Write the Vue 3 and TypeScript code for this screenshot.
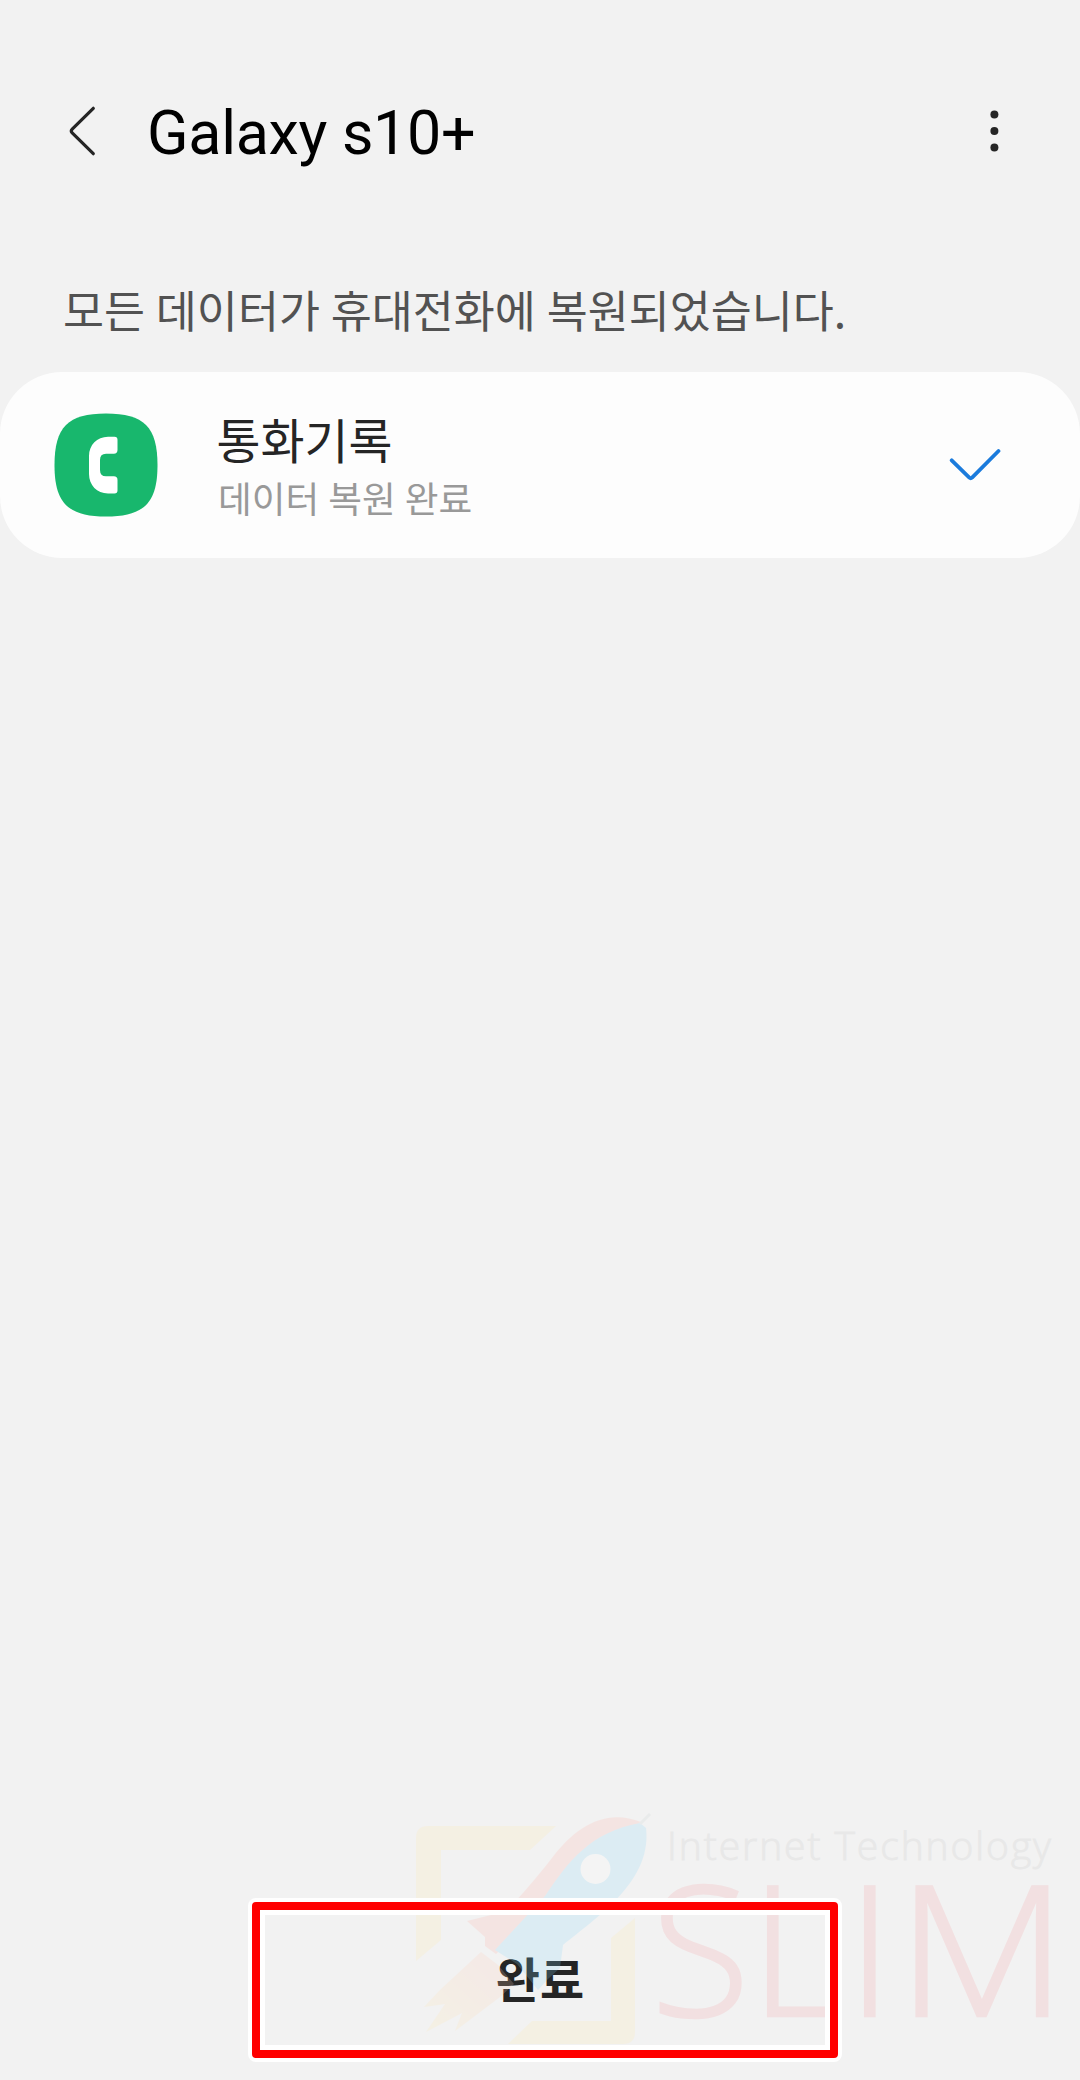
<script setup lang="ts">
interface BackupItem {
  name: string
  status: string
}

const deviceName = 'Galaxy s10+'
const message = '모든 데이터가 휴대전화에 복원되었습니다.'
const items: BackupItem[] = [{ name: '통화기록', status: '데이터 복원 완료' }]
</script>

<template>
  <main class="screen">
    <header class="bar">
      <svg class="back" viewBox="0 0 32 56" width="32" height="56" aria-hidden="true">
        <path d="M27.3 5.3 6.200 26.200Q4.400 28 6.200 29.900L27.300 50.700" />
      </svg>
      <h1 class="title">{{ deviceName }}</h1>
      <svg class="more" viewBox="0 0 12 44" width="12" height="44" aria-hidden="true">
        <circle cx="6.400" cy="5.500" r="4" />
        <circle cx="6.400" cy="22" r="4" />
        <circle cx="6.400" cy="38.500" r="4" />
      </svg>
    </header>

    <p class="message">{{ message }}</p>

    <ul class="card">
      <li v-for="item in items" :key="item.name" class="row">
        <svg class="app-icon" viewBox="0 0 104 104" width="104" height="104" aria-hidden="true">
          <path class="tile" d="M52 .5C90 .5 103.500 14 103.500 52S90 103.500 52 103.500.500 90 .500 52 14 .500 52 .500Z" />
          <path class="handset" d="M60.500 23.700H54C43 23.700 35 32 35 43V61C35 72 43 80.500 54 80.500H60.500Q63.500 80.500 63.500 77.500V67Q63.500 63.300 59.800 63.300H52Q46 63.300 46 57V47Q46 40.700 52 40.700H59.800Q63.500 40.700 63.500 37V26.700Q63.500 23.700 60.500 23.700Z" />
        </svg>
        <div class="labels">
          <span class="name">{{ item.name }}</span>
          <span class="status">{{ item.status }}</span>
        </div>
        <svg class="check" viewBox="0 0 54 36" width="54" height="36" aria-hidden="true">
          <path d="M4.700 13.300 22.300 30.600Q23.700 31.800 25.100 30.600L51.500 4" />
        </svg>
      </li>
    </ul>

    <footer class="footer">
      <button class="done" type="button">완료</button>
      <svg class="watermark" viewBox="400 1790 680 290" width="680" height="290" aria-hidden="true">
        <defs>
          <linearGradient id="flame" x1="1" y1="0" x2="0" y2="1">
            <stop offset="0.3" stop-color="#ffcfb8" />
            <stop offset="0.9" stop-color="#ffeab0" />
          </linearGradient>
        </defs>
        <g opacity="0.2">
          <path fill="#ffeaac" d="M416 1838Q416 1826 428 1826H556L530 1850H441V1940L416 1961ZM635 1918V2032Q635 2044 623 2044H508L532 2021H611V1938Z" />
          <path fill="#ffb0a6" d="M641 1822C606 1808 576 1826 552 1858 535 1880 522 1894 507 1911L467 1921 485 1937V1946L496 1954 560 1890 600 1850Z" />
          <path fill="#87d8fb" d="M640 1823C590 1832 568 1862 545 1896L495 1950 517 1964 538 1990Q548 1978 560 1968L563 1945C600 1915 652 1880 646 1828Z" />
          <path stroke="#c8d0d4" stroke-width="3" d="M640 1824 650 1814" />
          <path fill="url(#flame)" d="M481 1952 498 1965 514 1984 500 1997 455 2031 462 2013 426 2032 445 2004 424 2007 440 1990Z" />
          <circle cx="595.500" cy="1869" r="15" fill="#fff" />
        </g>
        <text class="tagline" x="667" y="1859.500" textLength="384" lengthAdjust="spacing">Internet Technology</text>
        <text class="brand" x="651 750 847" y="2015.500">SLI</text>
        <text class="brand" x="897" y="2015.500" textLength="170" lengthAdjust="spacingAndGlyphs">M</text>
      </svg>
      <div class="highlight"></div>
    </footer>
  </main>
</template>

<style>
body {
  background: #f2f2f2;
}
</style>

<style scoped>
.screen {
  display: flex;
  flex-direction: column;
  width: 1080px;
  height: 2080px;
  overflow: hidden;
  background: #f2f2f2;
  font-family: 'Noto Sans CJK KR', sans-serif;
}

.bar {
  display: flex;
  align-items: center;
  height: 261px;
  padding: 0 80px 0 66px;
  box-sizing: border-box;
}

.back path {
  fill: none;
  stroke: #252525;
  stroke-width: 3.2;
  stroke-linecap: round;
}

.title {
  flex: 1;
  margin: 4px 0 0 49px;
  color: #000;
  font: 400 61px/72px Roboto, sans-serif;
  letter-spacing: -0.3px;
}

.more {
  fill: #252525;
}

.message {
  height: 111px;
  margin: 0;
  padding: 15px 0 0 63px;
  box-sizing: border-box;
  color: #525252;
  font-size: 44.6px;
  line-height: 66px;
  word-spacing: 0.8px;
  white-space: nowrap;
}

.card {
  margin: 0;
  padding: 0;
  border-radius: 62px;
  background: #fdfdfd;
  list-style: none;
}

.row {
  display: flex;
  align-items: center;
  height: 186px;
  padding: 0 79px 0 53.5px;
  box-sizing: border-box;
}

.tile {
  fill: #18b76d;
}

.handset {
  fill: #fff;
}

.labels {
  display: flex;
  flex: 1;
  flex-direction: column;
  margin-left: 59px;
}

.name {
  color: #252525;
  font-size: 47.8px;
  line-height: 66px;
}

.status {
  margin: -1px 0 1px 1.5px;
  color: #999;
  font-size: 36.7px;
  line-height: 52px;
  word-spacing: 0.8px;
}

.check path {
  fill: none;
  stroke: #1b7bdc;
  stroke-width: 3.8;
  stroke-linecap: round;
}

.footer {
  position: relative;
  display: flex;
  justify-content: center;
  height: 290px;
  margin-top: auto;
}

.done {
  width: 585px;
  height: 156px;
  margin-top: 109px;
  padding: 0;
  border: 0;
  background: none;
  color: #252525;
  font: 700 48px/156px 'Noto Sans CJK KR', sans-serif;
}

.watermark {
  position: absolute;
  right: 0;
  bottom: 0;
}

.tagline {
  fill: #e8e8e8;
  stroke: #e8e8e8;
  stroke-width: 0.8;
  font: 300 39px 'Open Sans', sans-serif;
}

.brand {
  fill: #f2e0e1;
  stroke: #f2e0e1;
  stroke-width: 2.5;
  font: 300 181px 'Open Sans', sans-serif;
}

.highlight {
  position: absolute;
  top: 112px;
  left: 252px;
  width: 586px;
  height: 156px;
  box-sizing: border-box;
  border: 8.5px solid #f00;
  border-radius: 4px;
  box-shadow: 0 0 0 4px #fff, inset 0 0 0 5px #fff;
}
</style>
